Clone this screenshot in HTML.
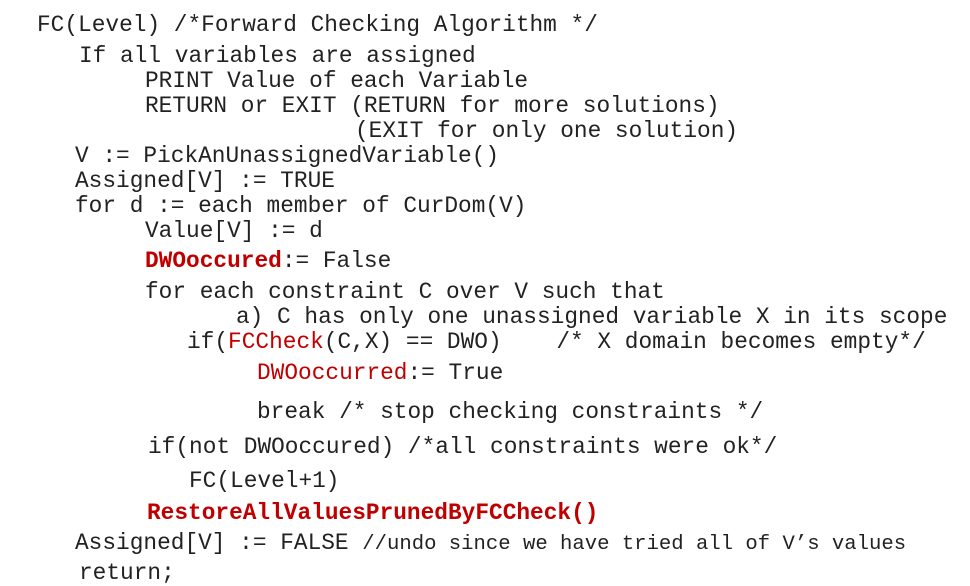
<!DOCTYPE html>
<html><head><meta charset="utf-8"><style>
body{margin:0;width:970px;height:586px;background:#fff;position:relative;overflow:hidden}
.l{position:absolute;font-family:"Liberation Mono",monospace;font-size:22.8px;line-height:26px;color:#222;white-space:pre}
.r{color:#c00000}
.b{font-weight:bold}
.s{font-size:20.6px}
</style></head><body>
<div class="l" style="left:37px;top:12px">FC(Level) /*Forward Checking Algorithm */</div>
<div class="l" style="left:79px;top:43px">If all variables are assigned</div>
<div class="l" style="left:145px;top:68px">PRINT Value of each Variable</div>
<div class="l" style="left:145px;top:93px">RETURN or EXIT (RETURN for more solutions)</div>
<div class="l" style="left:355px;top:118px">(EXIT for only one solution)</div>
<div class="l" style="left:75px;top:143px">V := PickAnUnassignedVariable()</div>
<div class="l" style="left:75px;top:168px">Assigned[V] := TRUE</div>
<div class="l" style="left:75px;top:193px">for d := each member of CurDom(V)</div>
<div class="l" style="left:145px;top:218px">Value[V] := d</div>
<div class="l" style="left:145px;top:248px"><span class="r b">DWOoccured</span>:= False</div>
<div class="l" style="left:145px;top:279px">for each constraint C over V such that</div>
<div class="l" style="left:236px;top:304px">a) C has only one unassigned variable X in its scope</div>
<div class="l" style="left:187px;top:329px">if(<span class="r">FCCheck</span>(C,X) == DWO)    /* X domain becomes empty*/</div>
<div class="l" style="left:257px;top:360px"><span class="r">DWOoccurred</span>:= True</div>
<div class="l" style="left:257px;top:399px">break /* stop checking constraints */</div>
<div class="l" style="left:148px;top:434px">if(not DWOoccured) /*all constraints were ok*/</div>
<div class="l" style="left:189px;top:468px">FC(Level+1)</div>
<div class="l r b" style="left:147px;top:500px">RestoreAllValuesPrunedByFCCheck()</div>
<div class="l" style="left:75px;top:530px">Assigned[V] := FALSE <span class="s">//undo since we have tried all of V’s values</span></div>
<div class="l" style="left:79px;top:560px">return;</div>
</body></html>
